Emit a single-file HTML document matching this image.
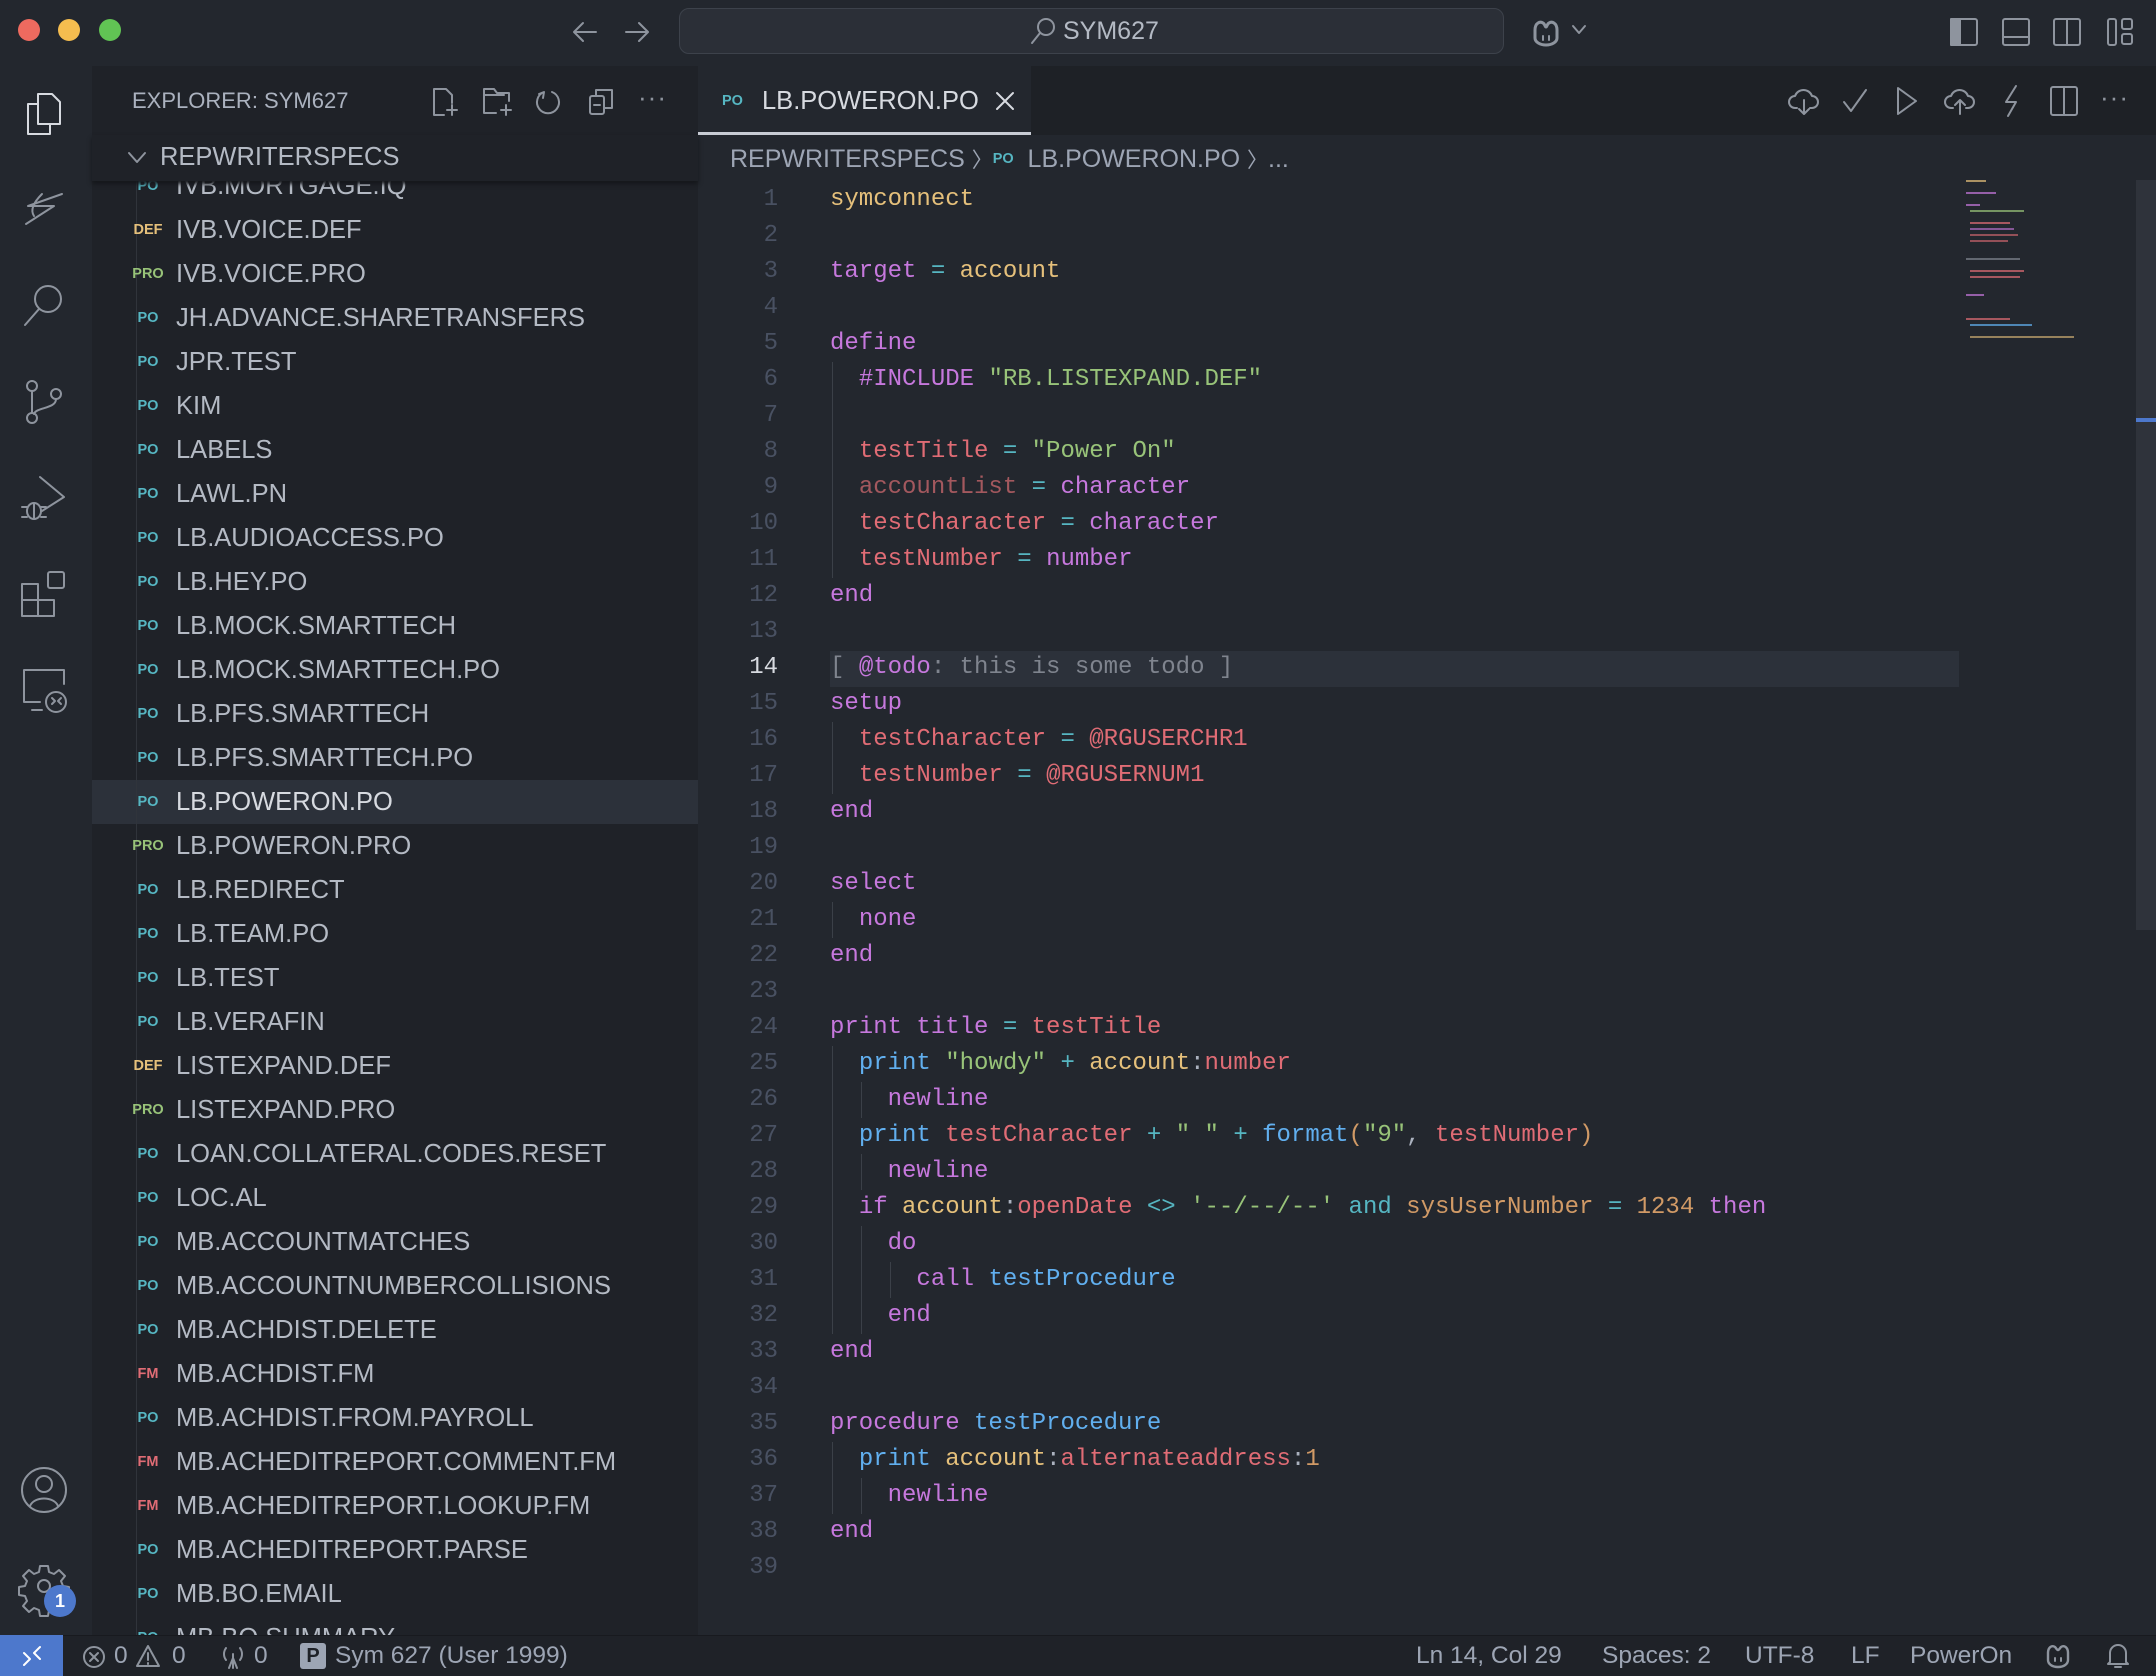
<!DOCTYPE html>
<html><head><meta charset="utf-8"><style>
*{margin:0;padding:0;box-sizing:border-box}
body{width:2156px;height:1676px;background:#23272e;position:relative;overflow:hidden;font-family:"Liberation Sans",sans-serif;color:#abb2bf}
.a{position:absolute}
#title{left:0;top:0;width:2156px;height:66px;background:#23272e}
#act{left:0;top:66px;width:92px;height:1569px;background:#23272e}
#side{left:92px;top:66px;width:606px;height:1569px;background:#1f2228}
#tabs{left:698px;top:66px;width:1458px;height:69px;background:#1e2126}
#status{left:0;top:1635px;width:2156px;height:41px;background:#1f2228;border-top:1px solid #181a1f}
.row{position:absolute;left:92px;width:606px;height:44px;font-size:25.5px;line-height:44px;color:#b4bac4;white-space:nowrap}
.row .b{position:absolute;left:38px;top:0;font-size:14.5px;font-weight:bold;width:36px;text-align:center}
.row .t{position:absolute;left:84px}
.po{color:#56b6c2}.def{color:#e5c07b}.pro{color:#98c379}.fm{color:#e06c75}
.ln{position:absolute;left:698px;width:80px;text-align:right;font:24px/36px "Liberation Mono",monospace;color:#495162}
.cl{position:absolute;left:830px;font:24px/36px "Liberation Mono",monospace;white-space:pre;color:#abb2bf}
.k{color:#c678dd}.y{color:#e5c07b}.r{color:#e06c75}.g{color:#98c379}.c{color:#56b6c2}.bl{color:#61afef}.o{color:#d19a66}.d{color:#a3585e}.gr{color:#7f848e}
.gd{position:absolute;width:1px;background:#3b4048}
svg{position:absolute;overflow:visible}
.ic{fill:none;stroke:#8e949e;stroke-width:2;stroke-linecap:round;stroke-linejoin:round}
.st{position:absolute;top:1642px;font-size:24.5px;color:#9da5b4;white-space:nowrap}
#code{position:absolute;left:0;top:3px;width:2156px;height:1600px}
</style></head><body>
<div id="title" class="a"></div>
<div class="a" style="left:18px;top:19px;width:22px;height:22px;border-radius:50%;background:#ee6a5f"></div>
<div class="a" style="left:58px;top:19px;width:22px;height:22px;border-radius:50%;background:#f5bd4f"></div>
<div class="a" style="left:99px;top:19px;width:22px;height:22px;border-radius:50%;background:#61c454"></div>
<svg style="left:572px;top:20px" width="26" height="24" class="ic"><path d="M24 12H3M11 3L2 12l9 9"/></svg>
<svg style="left:624px;top:20px" width="26" height="24" class="ic"><path d="M2 12h21M15 3l9 9-9 9"/></svg>
<div class="a" style="left:679px;top:8px;width:825px;height:46px;border-radius:10px;background:#2b2f37;border:1px solid #3d424b"></div>
<svg style="left:1030px;top:17px" width="26" height="28" class="ic"><circle cx="16" cy="10" r="8"/><path d="M10 16L2 26"/></svg>
<div class="a" style="left:1063px;top:17px;font-size:25px;color:#b4bac4">SYM627</div>
<svg style="left:1530px;top:18px" width="32" height="30" class="ic" ><path d="M5 12c0-7 5-9 8-7 2 1 2 4 3 4s1-3 3-4c3-2 8 0 8 7v8c0 4-5 7-11 7S5 24 5 20z" stroke-width="3"/><path d="M13 18v4M19 18v4"/></svg>
<svg style="left:1572px;top:25px" width="14" height="10" class="ic"><path d="M1 1l6 7 6-7"/></svg>
<svg style="left:1950px;top:18px" width="28" height="28" class="ic"><rect x="1" y="1" width="26" height="26" rx="2"/><rect x="1" y="1" width="9" height="26" fill="#8e949e"/></svg>
<svg style="left:2002px;top:18px" width="28" height="28" class="ic"><rect x="1" y="1" width="26" height="26" rx="2"/><path d="M1 19h26"/></svg>
<svg style="left:2053px;top:18px" width="28" height="28" class="ic"><rect x="1" y="1" width="26" height="26" rx="2"/><path d="M14 1v26"/></svg>
<svg style="left:2107px;top:18px" width="28" height="28" class="ic"><rect x="1" y="1" width="8" height="26" rx="2"/><rect x="15" y="1" width="10" height="10" rx="2"/><rect x="15" y="16" width="10" height="10" rx="2"/></svg>

<div id="act" class="a"></div>
<svg style="left:24px;top:92px" width="40" height="44" class="ic"><path d="M14 2h14l8 8v22H14z" stroke="#d7dae0"/><path d="M14 12H4v30h22v-10" stroke="#d7dae0"/></svg>
<svg style="left:22px;top:192px" width="44" height="34" class="ic"><path d="M40 2L6 14h26L4 32M20 2c-8 8-12 16-8 22" /></svg>
<svg style="left:22px;top:283px" width="44" height="44" class="ic"><circle cx="26" cy="16" r="13"/><path d="M17 26L3 42"/></svg>
<svg style="left:24px;top:378px" width="40" height="48" class="ic"><circle cx="8" cy="8" r="5"/><circle cx="8" cy="40" r="5"/><circle cx="32" cy="16" r="5"/><path d="M8 13v22M32 21c0 10-20 8-22 15"/></svg>
<svg style="left:20px;top:473px" width="48" height="50" class="ic"><path d="M20 4l24 20-22 14"/><ellipse cx="14" cy="38" rx="7" ry="8"/><path d="M2 34h5M21 34h5M2 44h5M21 44h5M14 30v16"/></svg>
<svg style="left:20px;top:570px" width="48" height="48" class="ic"><rect x="2" y="14" width="16" height="16"/><rect x="2" y="30" width="16" height="16"/><rect x="18" y="30" width="16" height="16"/><rect x="28" y="2" width="16" height="16" rx="2"/></svg>
<svg style="left:20px;top:668px" width="48" height="46" class="ic"><path d="M20 34H4V2h40v14M12 42h10"/><circle cx="36" cy="34" r="10"/><path d="M32 30l3 3-3 3M41 30l-3 3 3 3"/></svg>
<svg style="left:20px;top:1466px" width="48" height="48" class="ic"><circle cx="24" cy="24" r="22"/><circle cx="24" cy="18" r="8"/><path d="M10 40c4-10 24-10 28 0"/></svg>
<svg style="left:20px;top:1562px" width="48" height="48" class="ic"><circle cx="24" cy="24" r="6"/><path d="M20 4h8l1 6 5 2 5-4 6 6-4 5 2 5 6 1v8l-6 1-2 5 4 5-6 6-5-4-5 2-1 6h-8l-1-6-5-2-5 4-6-6 4-5-2-5-6-1v-8l6-1 2-5-4-5 6-6 5 4 5-2z"/></svg>
<div class="a" style="left:44px;top:1585px;width:32px;height:32px;border-radius:50%;background:#4d78cc;color:#fff;font-size:18px;font-weight:bold;text-align:center;line-height:32px">1</div>

<div id="side" class="a"></div>
<div class="a" style="left:132px;top:88px;font-size:22px;color:#abb2bf">EXPLORER: SYM627</div>
<svg style="left:432px;top:87px" width="26" height="30" class="ic"><path d="M14 2H2v26h10M14 2l6 6v8"/><path d="M20 18v10M15 23h10"/></svg>
<svg style="left:482px;top:87px" width="32" height="30" class="ic"><path d="M2 2h10l3 4h12v8M2 2v24h12M2 8h20"/><path d="M24 18v10M19 23h10"/></svg>
<svg style="left:534px;top:88px" width="28" height="28" class="ic"><path d="M10 4a11 11 0 1 0 8 0M10 4l-5 2M10 4l-1 6"/></svg>
<svg style="left:588px;top:88px" width="26" height="28" class="ic"><rect x="2" y="8" width="14" height="18" rx="2"/><path d="M8 8V2h16v18h-8M6 17h6"/></svg>
<div class="a" style="left:638px;top:82px;font-size:26px;color:#8e949e;letter-spacing:1px">···</div>

<div class="a" style="left:92px;top:135px;width:606px;height:46px;background:#1f2228;z-index:3;box-shadow:0 3px 4px #15171b"></div>
<svg style="left:128px;top:152px;z-index:4" width="18" height="12" class="ic"><path d="M1 1l8 9 8-9"/></svg>
<div class="a" style="left:160px;top:143px;font-size:25.5px;color:#b4bac4;z-index:4">REPWRITERSPECS</div>

<div class="a" style="left:92px;top:180px;width:606px;height:1455px;overflow:hidden">
<div class="a" style="left:0;top:-180px;width:606px;height:1700px">
<div class="a" style="left:0;top:780px;width:606px;height:44px;background:#2c313a"></div>
<div class="a" style="left:44px;top:150px;width:1px;height:1550px;background:#30343b"></div>
<div class="row" style="left:0;top:164px"><span class="b po">PO</span><span class="t">IVB.MORTGAGE.IQ</span></div>
<div class="row" style="left:0;top:208px"><span class="b def">DEF</span><span class="t">IVB.VOICE.DEF</span></div>
<div class="row" style="left:0;top:252px"><span class="b pro">PRO</span><span class="t">IVB.VOICE.PRO</span></div>
<div class="row" style="left:0;top:296px"><span class="b po">PO</span><span class="t">JH.ADVANCE.SHARETRANSFERS</span></div>
<div class="row" style="left:0;top:340px"><span class="b po">PO</span><span class="t">JPR.TEST</span></div>
<div class="row" style="left:0;top:384px"><span class="b po">PO</span><span class="t">KIM</span></div>
<div class="row" style="left:0;top:428px"><span class="b po">PO</span><span class="t">LABELS</span></div>
<div class="row" style="left:0;top:472px"><span class="b po">PO</span><span class="t">LAWL.PN</span></div>
<div class="row" style="left:0;top:516px"><span class="b po">PO</span><span class="t">LB.AUDIOACCESS.PO</span></div>
<div class="row" style="left:0;top:560px"><span class="b po">PO</span><span class="t">LB.HEY.PO</span></div>
<div class="row" style="left:0;top:604px"><span class="b po">PO</span><span class="t">LB.MOCK.SMARTTECH</span></div>
<div class="row" style="left:0;top:648px"><span class="b po">PO</span><span class="t">LB.MOCK.SMARTTECH.PO</span></div>
<div class="row" style="left:0;top:692px"><span class="b po">PO</span><span class="t">LB.PFS.SMARTTECH</span></div>
<div class="row" style="left:0;top:736px"><span class="b po">PO</span><span class="t">LB.PFS.SMARTTECH.PO</span></div>
<div class="row" style="left:0;top:780px;color:#d7dae0"><span class="b po">PO</span><span class="t">LB.POWERON.PO</span></div>
<div class="row" style="left:0;top:824px"><span class="b pro">PRO</span><span class="t">LB.POWERON.PRO</span></div>
<div class="row" style="left:0;top:868px"><span class="b po">PO</span><span class="t">LB.REDIRECT</span></div>
<div class="row" style="left:0;top:912px"><span class="b po">PO</span><span class="t">LB.TEAM.PO</span></div>
<div class="row" style="left:0;top:956px"><span class="b po">PO</span><span class="t">LB.TEST</span></div>
<div class="row" style="left:0;top:1000px"><span class="b po">PO</span><span class="t">LB.VERAFIN</span></div>
<div class="row" style="left:0;top:1044px"><span class="b def">DEF</span><span class="t">LISTEXPAND.DEF</span></div>
<div class="row" style="left:0;top:1088px"><span class="b pro">PRO</span><span class="t">LISTEXPAND.PRO</span></div>
<div class="row" style="left:0;top:1132px"><span class="b po">PO</span><span class="t">LOAN.COLLATERAL.CODES.RESET</span></div>
<div class="row" style="left:0;top:1176px"><span class="b po">PO</span><span class="t">LOC.AL</span></div>
<div class="row" style="left:0;top:1220px"><span class="b po">PO</span><span class="t">MB.ACCOUNTMATCHES</span></div>
<div class="row" style="left:0;top:1264px"><span class="b po">PO</span><span class="t">MB.ACCOUNTNUMBERCOLLISIONS</span></div>
<div class="row" style="left:0;top:1308px"><span class="b po">PO</span><span class="t">MB.ACHDIST.DELETE</span></div>
<div class="row" style="left:0;top:1352px"><span class="b fm">FM</span><span class="t">MB.ACHDIST.FM</span></div>
<div class="row" style="left:0;top:1396px"><span class="b po">PO</span><span class="t">MB.ACHDIST.FROM.PAYROLL</span></div>
<div class="row" style="left:0;top:1440px"><span class="b fm">FM</span><span class="t">MB.ACHEDITREPORT.COMMENT.FM</span></div>
<div class="row" style="left:0;top:1484px"><span class="b fm">FM</span><span class="t">MB.ACHEDITREPORT.LOOKUP.FM</span></div>
<div class="row" style="left:0;top:1528px"><span class="b po">PO</span><span class="t">MB.ACHEDITREPORT.PARSE</span></div>
<div class="row" style="left:0;top:1572px"><span class="b po">PO</span><span class="t">MB.BO.EMAIL</span></div>
<div class="row" style="left:0;top:1616px"><span class="b po">PO</span><span class="t">MB.BO.SUMMARY</span></div>
</div></div>

<div id="tabs" class="a"></div>
<div class="a" style="left:698px;top:66px;width:333px;height:69px;background:#23272e;border-bottom:3px solid #c8ccd4"></div>
<div class="a" style="left:722px;top:93px;font-size:14.5px;font-weight:bold;color:#56b6c2">PO</div>
<div class="a" style="left:762px;top:87px;font-size:25.5px;color:#d7dae0">LB.POWERON.PO</div>
<svg style="left:996px;top:92px" width="18" height="18" class="ic"><path d="M1 1l16 16M17 1L1 17" stroke="#d7dae0"/></svg>
<svg style="left:1788px;top:86px" width="32" height="30" class="ic"><path d="M9 22H7a6 6 0 0 1 0-12 9 9 0 0 1 17 0 6 6 0 0 1 0 12h-2M16 14v14M11 23l5 5 5-5"/></svg>
<svg style="left:1842px;top:88px" width="26" height="26" class="ic"><path d="M2 14l7 9L24 2"/></svg>
<svg style="left:1896px;top:86px" width="22" height="30" class="ic"><path d="M2 2l18 13L2 28z"/></svg>
<svg style="left:1944px;top:86px" width="32" height="30" class="ic"><path d="M9 22H7a6 6 0 0 1 0-12 9 9 0 0 1 17 0 6 6 0 0 1 0 12h-2M16 28V14M11 19l5-5 5 5"/></svg>
<svg style="left:2002px;top:84px" width="20" height="34" class="ic"><path d="M14 2L4 18h10L6 32"/></svg>
<svg style="left:2050px;top:86px" width="28" height="30" class="ic"><rect x="1" y="1" width="26" height="28" rx="2"/><path d="M14 1v28"/></svg>
<div class="a" style="left:2100px;top:82px;font-size:26px;color:#8e949e;letter-spacing:1px">···</div>

<div class="a" style="left:730px;top:144px;font-size:25px;color:#9da5b4;white-space:nowrap">REPWRITERSPECS <span style="font-size:21px">〉</span><span style="font-size:14.5px;font-weight:bold;color:#56b6c2;vertical-align:4px">PO</span>&nbsp; LB.POWERON.PO <span style="font-size:21px">〉</span>...</div>

<div id="code">
<div class="a" style="left:830px;top:648px;width:1129px;height:36px;background:#2c313a"></div>
<div class="gd" style="left:832px;top:359px;height:216px"></div>
<div class="gd" style="left:832px;top:719px;height:72px"></div>
<div class="gd" style="left:832px;top:899px;height:36px"></div>
<div class="gd" style="left:832px;top:1043px;height:288px"></div>
<div class="gd" style="left:861px;top:1079px;height:36px"></div>
<div class="gd" style="left:861px;top:1151px;height:36px"></div>
<div class="gd" style="left:861px;top:1223px;height:108px"></div>
<div class="gd" style="left:890px;top:1259px;height:36px"></div>
<div class="gd" style="left:832px;top:1439px;height:72px"></div>
<div class="gd" style="left:861px;top:1475px;height:36px"></div>

<div class="ln" style="top:179px">1</div><div class="ln" style="top:215px">2</div><div class="ln" style="top:251px">3</div><div class="ln" style="top:287px">4</div><div class="ln" style="top:323px">5</div><div class="ln" style="top:359px">6</div><div class="ln" style="top:395px">7</div><div class="ln" style="top:431px">8</div><div class="ln" style="top:467px">9</div><div class="ln" style="top:503px">10</div><div class="ln" style="top:539px">11</div><div class="ln" style="top:575px">12</div><div class="ln" style="top:611px">13</div><div class="ln" style="top:647px;color:#d7dae0">14</div><div class="ln" style="top:683px">15</div><div class="ln" style="top:719px">16</div><div class="ln" style="top:755px">17</div><div class="ln" style="top:791px">18</div><div class="ln" style="top:827px">19</div><div class="ln" style="top:863px">20</div><div class="ln" style="top:899px">21</div><div class="ln" style="top:935px">22</div><div class="ln" style="top:971px">23</div><div class="ln" style="top:1007px">24</div><div class="ln" style="top:1043px">25</div><div class="ln" style="top:1079px">26</div><div class="ln" style="top:1115px">27</div><div class="ln" style="top:1151px">28</div><div class="ln" style="top:1187px">29</div><div class="ln" style="top:1223px">30</div><div class="ln" style="top:1259px">31</div><div class="ln" style="top:1295px">32</div><div class="ln" style="top:1331px">33</div><div class="ln" style="top:1367px">34</div><div class="ln" style="top:1403px">35</div><div class="ln" style="top:1439px">36</div><div class="ln" style="top:1475px">37</div><div class="ln" style="top:1511px">38</div><div class="ln" style="top:1547px">39</div>

<div class="cl" style="top:179px"><span class="y">symconnect</span></div>
<div class="cl" style="top:251px"><span class="k">target</span> <span class="c">=</span> <span class="y">account</span></div>
<div class="cl" style="top:323px"><span class="k">define</span></div>
<div class="cl" style="top:359px">  <span class="k">#INCLUDE</span> <span class="g">"RB.LISTEXPAND.DEF"</span></div>
<div class="cl" style="top:431px">  <span class="r">testTitle</span> <span class="c">=</span> <span class="g">"Power On"</span></div>
<div class="cl" style="top:467px">  <span class="d">accountList</span> <span class="c">=</span> <span class="k">character</span></div>
<div class="cl" style="top:503px">  <span class="r">testCharacter</span> <span class="c">=</span> <span class="k">character</span></div>
<div class="cl" style="top:539px">  <span class="r">testNumber</span> <span class="c">=</span> <span class="k">number</span></div>
<div class="cl" style="top:575px"><span class="k">end</span></div>
<div class="cl" style="top:647px"><span class="gr">[ </span><span class="k">@todo</span><span class="gr">: this is some todo ]</span></div>
<div class="cl" style="top:683px"><span class="k">setup</span></div>
<div class="cl" style="top:719px">  <span class="r">testCharacter</span> <span class="c">=</span> <span class="r">@RGUSERCHR1</span></div>
<div class="cl" style="top:755px">  <span class="r">testNumber</span> <span class="c">=</span> <span class="r">@RGUSERNUM1</span></div>
<div class="cl" style="top:791px"><span class="k">end</span></div>
<div class="cl" style="top:863px"><span class="k">select</span></div>
<div class="cl" style="top:899px">  <span class="k">none</span></div>
<div class="cl" style="top:935px"><span class="k">end</span></div>
<div class="cl" style="top:1007px"><span class="k">print title</span> <span class="c">=</span> <span class="r">testTitle</span></div>
<div class="cl" style="top:1043px">  <span class="bl">print</span> <span class="g">"howdy"</span> <span class="c">+</span> <span class="y">account</span>:<span class="r">number</span></div>
<div class="cl" style="top:1079px">    <span class="k">newline</span></div>
<div class="cl" style="top:1115px">  <span class="bl">print</span> <span class="r">testCharacter</span> <span class="c">+</span> <span class="g">" "</span> <span class="c">+</span> <span class="bl">format</span><span class="o">(</span><span class="g">"9"</span>, <span class="r">testNumber</span><span class="o">)</span></div>
<div class="cl" style="top:1151px">    <span class="k">newline</span></div>
<div class="cl" style="top:1187px">  <span class="k">if</span> <span class="y">account</span>:<span class="r">openDate</span> <span class="c">&lt;&gt;</span> <span class="g">'--/--/--'</span> <span class="c">and</span> <span class="o">sysUserNumber</span> <span class="c">=</span> <span class="o">1234</span> <span class="k">then</span></div>
<div class="cl" style="top:1223px">    <span class="k">do</span></div>
<div class="cl" style="top:1259px">      <span class="k">call</span> <span class="bl">testProcedure</span></div>
<div class="cl" style="top:1295px">    <span class="k">end</span></div>
<div class="cl" style="top:1331px"><span class="k">end</span></div>
<div class="cl" style="top:1403px"><span class="k">procedure</span> <span class="bl">testProcedure</span></div>
<div class="cl" style="top:1439px">  <span class="bl">print</span> <span class="y">account</span>:<span class="r">alternateaddress</span>:<span class="o">1</span></div>
<div class="cl" style="top:1475px">    <span class="k">newline</span></div>
<div class="cl" style="top:1511px"><span class="k">end</span></div>
</div>

<div class="a" style="left:1966px;top:180px;width:140px;height:160px">
<div class="a" style="left:0;top:0;width:20px;height:2px;background:#e5c07b;opacity:.7"></div>
<div class="a" style="left:0;top:12px;width:30px;height:2px;background:#c678dd;opacity:.7"></div>
<div class="a" style="left:0;top:24px;width:14px;height:2px;background:#c678dd;opacity:.7"></div>
<div class="a" style="left:4px;top:30px;width:54px;height:2px;background:#98c379;opacity:.7"></div>
<div class="a" style="left:4px;top:42px;width:40px;height:2px;background:#e06c75;opacity:.7"></div>
<div class="a" style="left:4px;top:48px;width:44px;height:2px;background:#c678dd;opacity:.6"></div>
<div class="a" style="left:4px;top:54px;width:48px;height:2px;background:#e06c75;opacity:.6"></div>
<div class="a" style="left:4px;top:60px;width:38px;height:2px;background:#e06c75;opacity:.6"></div>
<div class="a" style="left:0;top:78px;width:54px;height:2px;background:#7f848e;opacity:.7"></div>
<div class="a" style="left:4px;top:90px;width:54px;height:2px;background:#e06c75;opacity:.7"></div>
<div class="a" style="left:4px;top:96px;width:50px;height:2px;background:#e06c75;opacity:.7"></div>
<div class="a" style="left:0;top:114px;width:18px;height:2px;background:#c678dd;opacity:.7"></div>
<div class="a" style="left:0;top:138px;width:44px;height:2px;background:#e06c75;opacity:.7"></div>
<div class="a" style="left:4px;top:144px;width:62px;height:2px;background:#61afef;opacity:.7"></div>
<div class="a" style="left:4px;top:156px;width:104px;height:2px;background:#e5c07b;opacity:.6"></div>
</div>
<div class="a" style="left:2136px;top:180px;width:20px;height:750px;background:#2f333b"></div>
<div class="a" style="left:2136px;top:418px;width:20px;height:4px;background:#4d78cc"></div>

<div id="status" class="a"></div>
<div class="a" style="left:0;top:1635px;width:63px;height:41px;background:#4d78cc"></div>
<svg style="left:22px;top:1645px" width="20" height="22" class="ic"><path d="M2 8l6 6-6 6M18 2l-6 6 6 6" stroke="#fff"/></svg>
<svg style="left:82px;top:1645px" width="24" height="24" class="ic"><circle cx="12" cy="12" r="10"/><path d="M8 8l8 8M16 8l-8 8"/></svg>
<div class="st" style="left:114px">0</div>
<svg style="left:135px;top:1644px" width="26" height="24" class="ic"><path d="M13 2L2 22h22zM13 9v7M13 19v1"/></svg>
<div class="st" style="left:172px">0</div>
<svg style="left:220px;top:1644px" width="26" height="26" class="ic"><path d="M13 10v14M9 24l4-10 4 10M6 4a10 10 0 0 0 0 12M20 4a10 10 0 0 1 0 12"/></svg>
<div class="st" style="left:254px">0</div>
<div class="a" style="left:300px;top:1643px;width:26px;height:26px;border-radius:3px;background:#9da5b4;color:#1f2228;font-weight:bold;font-size:20px;text-align:center;line-height:26px">P</div>
<div class="st" style="left:335px">Sym 627 (User 1999)</div>
<div class="st" style="left:1416px">Ln 14, Col 29</div>
<div class="st" style="left:1602px">Spaces: 2</div>
<div class="st" style="left:1745px">UTF-8</div>
<div class="st" style="left:1851px">LF</div>
<div class="st" style="left:1910px">PowerOn</div>
<svg style="left:2044px;top:1643px" width="28" height="26" class="ic"><path d="M4 10c0-6 4-8 7-6 1 1 2 3 3 3s2-2 3-3c3-2 7 0 7 6v7c0 4-4 7-10 7S4 21 4 17z" stroke-width="2.4"/><path d="M11 15v3M17 15v3"/></svg>
<svg style="left:2106px;top:1642px" width="24" height="28" class="ic"><path d="M4 20V11a8 8 0 0 1 16 0v9l2 2H2zM9 25h6"/></svg>
</body></html>
